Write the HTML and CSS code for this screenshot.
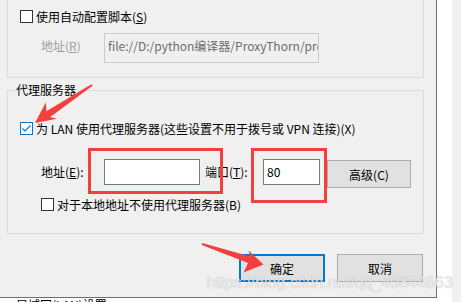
FILE: index.html
```html
<!DOCTYPE html>
<html lang="zh-CN">
<head>
    <meta charset="UTF-8">
    <title>局域网(LAN)设置</title>
    <link rel="stylesheet" href="styles.css">
</head>
<body>
    <div class="screen">
        <div class="window-area">
            <div class="dialog">
                <div class="group group-auto">
                    <label class="check-row">
                        <span class="checkbox"></span>
                        <span>使用自动配置脚本(<u>S</u>)</span>
                    </label>
                    <div class="field-row">
                        <span class="field-label disabled">地址(<u>R</u>)</span>
                        <div class="textbox textbox-disabled">file://D:/python编译器/ProxyThorn/proxy.pac</div>
                    </div>
                </div>

                <fieldset class="group group-proxy">
                    <legend>代理服务器</legend>
                    <label class="check-row">
                        <span class="checkbox checked">
                            <svg width="11" height="11" viewBox="0 0 11 11"><path d="M1.5 5.5 L4 8 L9.5 2.5" fill="none" stroke="#0078d7" stroke-width="1.2"/></svg>
                        </span>
                        <span>为 LAN 使用代理服务器(这些设置不用于拨号或 VPN 连接)(X)</span>
                    </label>
                    <div class="proxy-row">
                        <span class="field-label">地址(<u>E</u>):</span>
                        <div class="textbox textbox-address"></div>
                        <span class="port-label">端口(<u>T</u>):</span>
                        <div class="textbox textbox-port">80</div>
                        <button class="btn btn-advanced">高级(C)</button>
                    </div>
                    <label class="check-row check-bypass">
                        <span class="checkbox"></span>
                        <span>对于本地地址不使用代理服务器(B)</span>
                    </label>
                </fieldset>

                <div class="dialog-buttons">
                    <button class="btn btn-default">确定</button>
                    <button class="btn">取消</button>
                </div>
            </div>
            <div class="parent-title">局域网(LAN)设置</div>
        </div>
        <div class="desktop-edge"></div>

        <!-- marcas rojas de la captura -->
        <svg class="annotations" width="461" height="302" viewBox="0 0 461 302">
            <rect x="89.5" y="149.5" width="132" height="43" fill="none" stroke="#f43f3f" stroke-width="3"/>
            <rect x="252.5" y="149.5" width="73" height="52" fill="none" stroke="#f43f3f" stroke-width="3"/>
            <polygon points="91.4,84.2 46.4,111.2 45.9,102.2 35,123 57.1,118.8 50.2,117 92.6,85.8" fill="#f43f3f"/>
            <polygon points="202.3,243 250.3,256.5 248.5,250.5 263.5,264.5 243.5,272.5 248.1,263.1 201.7,245" fill="#f43f3f"/>
        </svg>
        <div class="watermark">https://blog.csdn.net/qq_40844663</div>
    </div>
</body>
</html>
```

FILE: styles.css
```css
* {
    box-sizing: border-box;
}

body {
    margin: 0;
    font-family: "Noto Sans CJK SC", sans-serif;
    font-size: 12px;
    color: #000;
    background: #f0f0f0;
}

.screen {
    position: relative;
    display: flex;
    width: 461px;
    height: 302px;
    overflow: hidden;
}

.window-area {
    width: 452px;
    background: #fff;
}

.desktop-edge {
    flex: 1;
    background: #f0f0f0;
}

.dialog {
    width: 437px;
    height: 298px;
    padding-left: 7px;
    background: #f0f0f0;
    border-right: 1px solid #707070;
    border-bottom: 1px solid #707070;
}

.group {
    width: 417px;
    margin: 0;
    border: 1px solid #dcdcdc;
}

.group-auto {
    border-top: 0;
    padding: 10px 0 14px 12px;
}

.check-row {
    display: flex;
    align-items: center;
    gap: 3px;
    height: 13px;
    line-height: 16px;
    white-space: nowrap;
}

.checkbox {
    flex: none;
    display: flex;
    width: 13px;
    height: 13px;
    border: 1px solid #333;
    background: #fff;
}

.checkbox.checked {
    border-color: #0078d7;
}

.field-row {
    display: flex;
    align-items: flex-start;
    margin: 10px 0 0 21px;
}

.field-label {
    flex: none;
    width: 63px;
    line-height: 26px;
}

.disabled {
    color: #a0a0a0;
}

.textbox {
    flex: none;
    height: 26px;
    padding: 0 3px;
    border: 1px solid #7a7a7a;
    background: #fff;
    line-height: 24px;
    white-space: nowrap;
    overflow: hidden;
}

.textbox-disabled {
    width: 215px;
    height: 30px;
    border-color: #ccc;
    background: #f0f0f0;
    color: #6d6d6d;
}

/* grupo del servidor proxy */
.group-proxy {
    margin-top: 4px;
    padding: 0 0 22px 0;
    min-width: 0;
}

.group-proxy legend {
    margin-left: 7px;
    padding: 0 1px;
    line-height: 16px;
}

.group-proxy .check-row {
    margin: 24px 0 0 12px;
}

.proxy-row {
    display: flex;
    align-items: flex-start;
    margin: 24px 0 0 33px;
}

.textbox-address {
    width: 96px;
}

.port-label {
    width: 58px;
    margin-left: 5px;
    line-height: 26px;
}

.textbox-port {
    width: 57px;
}

.btn {
    width: 86px;
    height: 28px;
    padding: 0;
    border: 1px solid #adadad;
    background: #e1e1e1;
    font: inherit;
    color: #000;
}

.btn-advanced {
    width: 84px;
    margin: 1px 0 0 7px;
}

.group-proxy .check-bypass {
    margin: 10px 0 0 33px;
}

.dialog-buttons {
    display: flex;
    justify-content: flex-end;
    gap: 12px;
    width: 416px;
    margin-top: 20px;
}

.btn-default {
    border: 2px solid #0078d7;
}

.parent-title {
    padding-left: 16px;
    line-height: 14px;
}

.annotations {
    position: absolute;
    left: 0;
    top: 0;
    pointer-events: none;
}

.watermark {
    position: absolute;
    left: 207px;
    top: 275px;
    font-family: "Liberation Sans", Arial, sans-serif;
    font-size: 16px;
    line-height: 16px;
    color: rgba(255, 255, 255, 0.8);
    text-shadow: 0 0 1px rgba(0, 0, 0, 0.35);
    white-space: nowrap;
    pointer-events: none;
}
```
